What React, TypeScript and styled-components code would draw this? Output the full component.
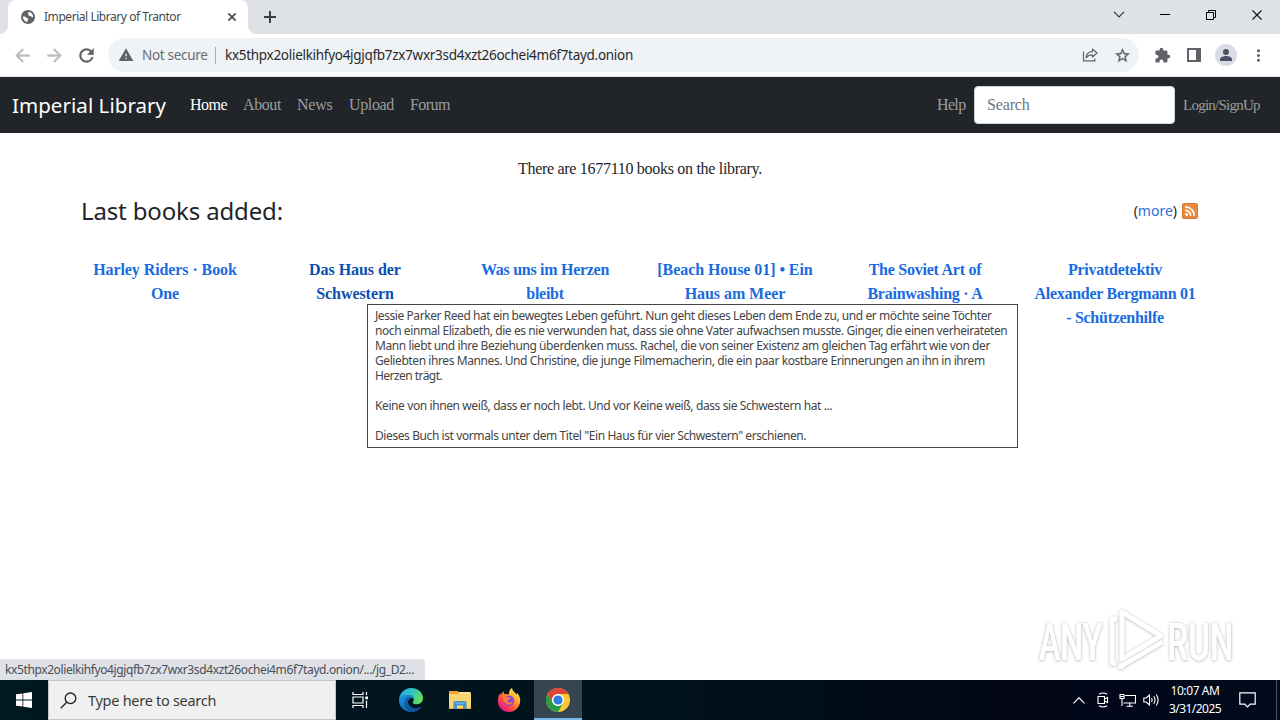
import React from 'react'
import styled, { createGlobalStyle } from 'styled-components'
import {
  MdArrowBack,
  MdArrowForward,
  MdExtension,
  MdMoreVert,
  MdRefresh,
  MdStarBorder,
  MdWarning
} from 'react-icons/md'

const GlobalStyle = createGlobalStyle`
  * {
    box-sizing: border-box;
  }

  body {
    margin: 0;
    background: #ffffff;
    overflow: hidden;
  }

  svg {
    display: block;
    flex: none;
  }
`

const uiFont = `'Noto Sans', 'Open Sans', sans-serif`
const serifFont = `'Liberation Serif', serif`

type TextProps = { $spacing?: number }

const Screen = styled.div`
  position: relative;
  display: flex;
  flex-direction: column;
  width: 1280px;
  height: 720px;
  font-family: ${uiFont};
`

/* ---- browser chrome ---- */

const TabStrip = styled.div`
  display: flex;
  height: 34px;
  padding-left: 8px;
  background: #dee1e6;
`

const Tab = styled.div`
  position: relative;
  display: flex;
  align-items: center;
  width: 240px;
  height: 34px;
  padding: 0 12px 0 13px;
  border-radius: 8px 8px 0 0;
  background: #ffffff;
  color: #5f6368;

  &::before,
  &::after {
    content: '';
    position: absolute;
    bottom: 0;
    width: 8px;
    height: 8px;
  }

  &::before {
    left: -8px;
    background: radial-gradient(circle at 0 0, #dee1e6 7.5px, #ffffff 8px);
  }

  &::after {
    right: -8px;
    background: radial-gradient(circle at 100% 0, #dee1e6 7.5px, #ffffff 8px);
  }
`

const TabTitle = styled.span<TextProps>`
  flex: 1;
  margin-left: 9px;
  font-size: 12px;
  line-height: 16px;
  letter-spacing: ${p => p.$spacing ?? 0}px;
  white-space: nowrap;
  color: #45494d;
`

const NewTab = styled.div`
  display: flex;
  align-items: center;
  margin-left: 16px;
`

const WindowButtons = styled.div`
  display: flex;
  height: 29px;
  margin-left: auto;
`

const WindowButton = styled.div`
  display: flex;
  align-items: center;
  justify-content: center;
  width: 46px;
`

const Toolbar = styled.div`
  display: flex;
  align-items: center;
  height: 43px;
  padding: 0 6px;
  border-bottom: 1px solid #e3e5e8;
  background: #ffffff;
  color: #5f6368;
`

const ToolButton = styled.div<{ $muted?: boolean; $bold?: boolean }>`
  display: flex;
  align-items: center;
  justify-content: center;
  width: 32px;
  height: 32px;
  color: ${p => (p.$muted ? '#babcbe' : '#5f6368')};

  svg {
    stroke-width: ${p => (p.$bold ? 0.5 : 0)};
  }

  /* material icons carry an empty bounding path */
  path[fill='none'][d^='M0 0'] {
    stroke: none;
  }
`

const Omnibox = styled.div`
  display: flex;
  align-items: center;
  width: 1031px;
  height: 34px;
  margin: 0 7px 0 6px;
  padding: 0 1px 0 10px;
  border-radius: 17px;
  background: #f0f3f5;
`

const Security = styled.span<TextProps>`
  width: 74px;
  margin-left: 8px;
  border-right: 1px solid #a9adb2;
  font-size: 13.5px;
  line-height: 17px;
  letter-spacing: ${p => p.$spacing ?? 0}px;
  white-space: nowrap;
  color: #686c71;
`

const Url = styled.span<TextProps>`
  flex: 1;
  margin-left: 9px;
  font-size: 13.5px;
  line-height: 18px;
  letter-spacing: ${p => p.$spacing ?? 0}px;
  white-space: nowrap;
  color: #26292c;
`

/* ---- page ---- */

const Page = styled.div`
  position: relative;
  flex: 1;
  background: #ffffff;
  color: #212529;
`

const Navbar = styled.nav`
  display: flex;
  align-items: center;
  height: 56px;
  padding: 0 12px;
  background: #212529;
  font-family: ${serifFont};
`

const Brand = styled.span<TextProps>`
  width: 178px;
  font-family: ${uiFont};
  font-size: 20.5px;
  line-height: 30px;
  letter-spacing: ${p => p.$spacing ?? 0}px;
  white-space: nowrap;
  color: #ffffff;
`

const NavLink = styled.span<{ $width: number; $active?: boolean; $size?: number; $spacing?: number }>`
  width: ${p => p.$width}px;
  font-size: ${p => p.$size ?? 16}px;
  line-height: 24px;
  letter-spacing: ${p => p.$spacing ?? 0}px;
  white-space: nowrap;
  color: ${p => (p.$active ? '#ffffff' : '#9b9d9f')};
`

const NavEnd = styled.div`
  display: flex;
  align-items: center;
  margin-left: auto;
`

const SearchInput = styled.input`
  width: 201px;
  height: 38px;
  margin-right: 8px;
  padding: 0 12px;
  border: 1px solid #ced4da;
  border-radius: 4px;
  background: #ffffff;
  font-family: ${serifFont};
  font-size: 16px;
  letter-spacing: -0.15px;

  &::placeholder {
    color: #6c757d;
    opacity: 1;
  }
`

const Container = styled.div`
  width: 1140px;
  margin: 0 auto;
`

const Summary = styled.p<TextProps>`
  margin: 24px 0 0;
  font-family: ${serifFont};
  font-size: 16px;
  line-height: 24px;
  letter-spacing: ${p => p.$spacing ?? 0}px;
  text-align: center;
`

const HeadingRow = styled.div`
  display: flex;
  align-items: center;
  justify-content: space-between;
  height: 60px;
  padding: 0 12px 0 11px;
`

const Heading = styled.h4<TextProps>`
  margin: 0;
  padding-bottom: 2px;
  font-size: 24px;
  font-weight: 400;
  line-height: 29px;
  letter-spacing: ${p => p.$spacing ?? 0}px;
`

const More = styled.div<TextProps>`
  display: flex;
  align-items: center;
  gap: 5px;
  font-size: 14px;
  line-height: 20px;
  letter-spacing: ${p => p.$spacing ?? 0}px;

  a {
    color: #2b6fd8;
  }
`

const Books = styled.div`
  display: grid;
  grid-template-columns: repeat(6, 190px);
  margin-top: 17px;
`

const BookTitle = styled.a<{ $hover?: boolean; $spacing?: number }>`
  font-family: ${serifFont};
  font-size: 16px;
  font-weight: 700;
  line-height: 24px;
  letter-spacing: ${p => p.$spacing ?? 0}px;
  text-align: center;
  white-space: pre-line;
  color: ${p => (p.$hover ? '#0a4fb0' : '#1a6be0')};
`

const Tooltip = styled.div`
  position: absolute;
  left: 367px;
  top: 227px;
  width: 651px;
  height: 144px;
  padding: 3px 7px;
  border: 1px solid #454545;
  background: #ffffff;
  font-size: 12px;
  line-height: 15px;
  color: #454545;
`

const TooltipLine = styled.div<TextProps>`
  height: 15px;
  letter-spacing: ${p => p.$spacing ?? 0}px;
  white-space: nowrap;
`

const StatusBubble = styled.div<TextProps>`
  position: absolute;
  left: 0;
  bottom: 0;
  width: 425px;
  height: 21px;
  padding-left: 5px;
  border-radius: 0 4px 0 0;
  background: #dee1e6;
  font-size: 12px;
  line-height: 22px;
  letter-spacing: ${p => p.$spacing ?? 0}px;
  white-space: nowrap;
  color: #4b4f54;
`

const Watermark = styled.div`
  position: absolute;
  right: 40px;
  bottom: 4px;
`

/* ---- taskbar ---- */

const TaskbarRoot = styled.div`
  display: flex;
  height: 40px;
  background: linear-gradient(90deg, #001821 0%, #00131d 50%, #020617 80%, #010a1c 100%);
  color: #ffffff;
`

const TaskButton = styled.div<{ $width?: number; $active?: boolean }>`
  display: flex;
  align-items: center;
  justify-content: center;
  width: ${p => p.$width ?? 49}px;
  height: 40px;
  border-bottom: 2px solid ${p => (p.$active ? '#76b9ed' : 'transparent')};
  padding-top: 2px;
  background: ${p => (p.$active ? '#36454e' : 'transparent')};
`

const TaskSearch = styled.div<TextProps>`
  display: flex;
  align-items: center;
  gap: 11px;
  width: 288px;
  height: 40px;
  padding-left: 11px;
  border: 1px solid #c4c6c7;
  background: #f0f0f0;
  font-size: 14.5px;
  letter-spacing: ${p => p.$spacing ?? 0}px;
  white-space: nowrap;
  color: #3a3a3a;
`

const Tray = styled.div`
  display: flex;
  align-items: center;
  margin-left: auto;
`

const TrayItem = styled.div<{ $width?: number }>`
  display: flex;
  justify-content: center;
  width: ${p => p.$width ?? 24}px;
`

const Clock = styled.div`
  width: 64px;
  font-size: 12px;
  line-height: 18px;
  text-align: center;
  white-space: nowrap;
`

const ClockLine = styled.div<TextProps>`
  letter-spacing: ${p => p.$spacing ?? 0}px;
`

const ShowDesktop = styled.div`
  width: 4px;
  height: 40px;
  margin-left: 8px;
  border-left: 1px solid #4a5260;
`

const books = [
  { title: 'Harley Riders · Book\nOne', spacing: -0.08 },
  { title: 'Das Haus der\nSchwestern', spacing: -0.05, hover: true },
  { title: 'Was uns im Herzen\nbleibt', spacing: -0.28 },
  { title: '[Beach House 01] • Ein\nHaus am Meer', spacing: -0.06 },
  { title: 'The Soviet Art of\nBrainwashing · A', spacing: -0.25 },
  { title: 'Privatdetektiv\nAlexander Bergmann 01\n- Schützenhilfe', spacing: -0.27 }
]

const description: [string, number][] = [
  ['Jessie Parker Reed hat ein bewegtes Leben geführt. Nun geht dieses Leben dem Ende zu, und er möchte seine Töchter', -0.43],
  ['noch einmal Elizabeth, die es nie verwunden hat, dass sie ohne Vater aufwachsen musste. Ginger, die einen verheirateten', -0.42],
  ['Mann liebt und ihre Beziehung überdenken muss. Rachel, die von seiner Existenz am gleichen Tag erfährt wie von der', -0.413],
  ['Geliebten ihres Mannes. Und Christine, die junge Filmemacherin, die ein paar kostbare Erinnerungen an ihn in ihrem', -0.413],
  ['Herzen trägt.', -0.55],
  ['', 0],
  ['Keine von ihnen weiß, dass er noch lebt. Und vor Keine weiß, dass sie Schwestern hat ...', -0.4],
  ['', 0],
  ['Dieses Buch ist vormals unter dem Titel "Ein Haus für vier Schwestern" erschienen.', -0.41]
]

const GlobeIcon = () => (
  <svg width="14" height="14" viewBox="0 0 14 14">
    <circle cx="7" cy="7" r="7" fill="#5f6368" />
    <path d="M1.800 6.600c1.800-.2 3 .3 3.600 1.200.5.800 1.700.3 1.900 1.300.1 1-1 1.100-1.200 2.800-2.600-.4-4.300-2.700-4.300-5.300z" fill="#ffffff" />
    <path d="M7.200 2c1.800 0 3.300.8 4.200 2.200.5.900.7 1.900.6 3-.9.3-1.700-.2-2-.9-.4-.8-1.800-.2-2.400-.9-.5-.7.300-1.200-.2-1.800-.4-.5-.8-.9-.2-1.600z" fill="#ffffff" />
  </svg>
)

const CloseIcon = ({ size, color, weight }: { size: number; color: string; weight: number }) => (
  <svg width={size} height={size} viewBox="0 0 10 10" stroke={color} strokeWidth={weight}>
    <path d="M.5.5l9 9M9.5.5l-9 9" />
  </svg>
)

const ShareIcon = () => (
  <svg width="16" height="16" viewBox="0 0 16 16" fill="none" stroke="#5f6368">
    <g strokeWidth="1.200">
      <path d="M1.500 4.500v9.300h11.300v-2.300" />
      <path d="M10.500 2l4.500 4-4.500 4V7.800C7.500 7.800 5.500 8.800 4 11c.3-3.800 2.600-6.300 6.500-6.700z" strokeLinejoin="round" />
    </g>
  </svg>
)

const RssIcon = () => (
  <svg width="16" height="16" viewBox="0 0 16 16" fill="none" stroke="#ffffff" strokeWidth="1.800">
    <rect width="16" height="16" rx="2.500" fill="#ea8a42" stroke="none" />
    <rect x=".5" y=".5" width="15" height="15" rx="2.500" stroke="#d9752f" strokeWidth="1" />
    <circle cx="4.600" cy="11.500" r="1.400" fill="#ffffff" stroke="none" />
    <path d="M3.200 7.300a5.500 5.500 0 0 1 5.500 5.500M3.200 3.800a9 9 0 0 1 9 9" />
  </svg>
)

const EdgeIcon = () => (
  <svg width="24" height="24" viewBox="0 0 24 24">
    <defs>
      <linearGradient id="edgeTop" x1="0" y1="0" x2="1" y2="0.400">
        <stop offset="0" stopColor="#1f9fe0" />
        <stop offset="0.550" stopColor="#2fc5c6" />
        <stop offset="1" stopColor="#64dc5c" />
      </linearGradient>
      <linearGradient id="edgeBody" x1="0" y1="0" x2="0.700" y2="1">
        <stop offset="0" stopColor="#2196e0" />
        <stop offset="1" stopColor="#0b5aa8" />
      </linearGradient>
    </defs>
    <path d="M0 12C.4 5 5.500 0 12 0c7 0 12 4.800 12 10.300 0 3.600-2.700 5.900-6 5.900-2.600 0-4.300-.9-4.300-1.800 0-.6 1.100-1 1.100-2.700C14.800 9 12.400 7 9 7 4.500 7 1 9 0 12z" fill="url(#edgeTop)" />
    <path d="M0 12C.8 8.700 4.200 6.700 8.500 6.700c3.200 0 5.700 1.600 6.200 4-1.200-1-3-.9-4.300.3-2.800 2.600-1.200 7.500 3.600 9 2.900.9 5.700.2 8.300-1.600C20.200 22 16.500 24 12 24 5 24-.3 18.500 0 12z" fill="url(#edgeBody)" />
    <path d="M8 9.500c-4 3-3.500 11.500 4 14.500 4.300 0 8-2 10.300-5.600-2.600 1.800-5.400 2.500-8.300 1.600-4.800-1.500-6.400-6.400-3.600-9 .5-.5 1.100-.8 1.700-.9-1.200-.9-2.800-1.200-4.100-.6z" fill="#0f4f96" opacity="0.700" />
  </svg>
)

const ExplorerIcon = () => (
  <svg width="22" height="18" viewBox="0 0 22 18">
    <path d="M0 0h9l1.500 2H22v16H0z" fill="#f2a52e" />
    <path d="M10 1h11.500v2.500H10z" fill="#fbe6a0" />
    <path d="M0 3h22v14H0z" fill="#fbd571" />
    <path d="M4.500 18v-6q0-2 2-2h9q2 0 2 2v6h-3.500v-3.500H8V18z" fill="#4393c8" />
    <path d="M6.500 11.500h9v1.500h-9z" fill="#6cb4dd" />
  </svg>
)

const FirefoxIcon = () => (
  <svg width="24" height="24" viewBox="0 0 24 24">
    <defs>
      <linearGradient id="foxFire" x1="0.850" y1="0.100" x2="0.200" y2="0.900">
        <stop offset="0" stopColor="#fff44f" />
        <stop offset="0.350" stopColor="#ffa02b" />
        <stop offset="0.700" stopColor="#ff4a41" />
        <stop offset="1" stopColor="#e3178a" />
      </linearGradient>
      <radialGradient id="foxGlobe">
        <stop offset="0" stopColor="#6a4be8" />
        <stop offset="1" stopColor="#a03dd8" />
      </radialGradient>
    </defs>
    <path d="M15 0c.2 2.200 1.700 3.300 3 4.700.8.800 1.300 1.500 1.600 2.300l.4-2.300c2.200 2.300 3.300 5.200 3.200 8.300C23 19 18.200 24 12 24S.8 19.200.8 13c0-3.300 1-5.800 2.500-8l.6 2.200C4.500 5.500 5.400 4.300 6.500 3.200c0 1.400.5 2.300 1.200 3 1.300-.4 2.800-.3 4.100.3C11.700 3.700 13 1.300 15 0z" fill="url(#foxFire)" />
    <circle cx="12" cy="12.800" r="5.300" fill="url(#foxGlobe)" />
    <path d="M5.500 9.500c1.500-1.500 4-1.500 6 0 .8.600 1.600.6 2.300.6-.4 1.200-1.700 1.600-2.600 2-.9.500-.9 1.500 0 2 1.700.9 3.500-.3 5 .4-1.500 2-4.700 2.800-7 1.200-2-1.300-3.400-3.600-3.700-6.200z" fill="#ff7b35" />
  </svg>
)

const ChromeIcon = () => (
  <svg width="24" height="24" viewBox="0 0 24 24">
    <circle cx="12" cy="12" r="12" fill="#fcc934" />
    <path d="M1.600 6A12 12 0 0 1 22.400 6H12a6 6 0 0 0-5.200 9z" fill="#dd4637" />
    <path d="M1.600 6A12 12 0 0 0 12 24l5.200-9A6 6 0 0 1 6.800 15z" fill="#2a9b4c" />
    <circle cx="12" cy="12" r="6" fill="#ffffff" />
    <circle cx="12" cy="12" r="4.600" fill="#2f7be4" />
  </svg>
)

const WatermarkLogo = () => (
  <svg width="206" height="74" viewBox="0 0 206 74">
    <defs>
      <filter id="markShadow" x="-5%" y="-10%" width="110%" height="125%">
        <feDropShadow dx="0" dy="0.500" stdDeviation="1.800" floodColor="#000000" floodOpacity="0.360" />
      </filter>
    </defs>
    <g filter="url(#markShadow)" fill="#ffffff">
      <g fontFamily="Roboto, sans-serif" fontSize="52" fontWeight="500">
        <text transform="translate(5 57.500) scale(.62 1)">ANY</text>
        <text transform="translate(133.500 57.500) scale(.635 1)">RUN</text>
      </g>
      <g fill="none" stroke="#ffffff" strokeWidth="4.500" strokeLinejoin="round">
        <path d="M88 10l39 24-39 23z" />
        <path d="M83 17h-5v44h4M87 67v-3l41-24" />
      </g>
    </g>
  </svg>
)

const BrowserTop: React.FC = () => (
  <>
    <TabStrip>
      <Tab>
        <GlobeIcon />
        <TabTitle $spacing={-0.45}>Imperial Library of Trantor</TabTitle>
        <CloseIcon size={8} color="#45494d" weight={2} />
      </Tab>
      <NewTab>
        <svg width="12" height="12" viewBox="0 0 12 12" stroke="#3c4043" strokeWidth="2">
          <path d="M6 0v12M0 6h12" />
        </svg>
      </NewTab>
      <WindowButtons>
        <WindowButton>
          <svg width="12" height="7" viewBox="0 0 12 7" fill="none" stroke="#333333" strokeWidth="1.200">
            <path d="M1 .8l5 5 5-5" />
          </svg>
        </WindowButton>
        <WindowButton>
          <svg width="10" height="1" viewBox="0 0 10 1"><path d="M0 0h10v1H0z" /></svg>
        </WindowButton>
        <WindowButton>
          <svg width="10" height="10" viewBox="0 0 10 10" fill="none" stroke="#000000">
            <path d="M.5 2.500h7v7h-7zM2.500 2.500v-2h7v7h-2" />
          </svg>
        </WindowButton>
        <WindowButton>
          <CloseIcon size={10} color="#111111" weight={1.1} />
        </WindowButton>
      </WindowButtons>
    </TabStrip>
    <Toolbar>
      <ToolButton $muted $bold><MdArrowBack size={21} /></ToolButton>
      <ToolButton $muted $bold><MdArrowForward size={21} /></ToolButton>
      <ToolButton $bold><MdRefresh size={21} /></ToolButton>
      <Omnibox>
        <MdWarning size={16} />
        <Security $spacing={-0.3}>Not secure</Security>
        <Url $spacing={-0.29}>kx5thpx2olielkihfyo4jgjqfb7zx7wxr3sd4xzt26ochei4m6f7tayd.onion</Url>
        <ToolButton><ShareIcon /></ToolButton>
        <ToolButton $bold><MdStarBorder size={17} /></ToolButton>
      </Omnibox>
      <ToolButton><MdExtension size={17} /></ToolButton>
      <ToolButton>
        <svg width="14" height="14" viewBox="0 0 14 14" fill="#5f6368">
          <path d="M0 0h14v14H0zM2 2v10h7V2z" fillRule="evenodd" />
        </svg>
      </ToolButton>
      <ToolButton>
        <svg width="22" height="22" viewBox="0 0 22 22">
          <circle cx="11" cy="11" r="11" fill="#dadce6" />
          <circle cx="11" cy="8" r="3" fill="#4b5066" />
          <path d="M5 17v-1.600C5 13.200 8.500 12 11 12s6 1.200 6 3.400V17z" fill="#4b5066" />
        </svg>
      </ToolButton>
      <ToolButton><MdMoreVert size={19} /></ToolButton>
    </Toolbar>
  </>
)

const LibraryPage: React.FC = () => (
  <Page>
    <Navbar>
      <Brand $spacing={0.05}>Imperial Library</Brand>
      <NavLink $width={53} $spacing={-0.5} $active>Home</NavLink>
      <NavLink $width={54} $spacing={-0.4}>About</NavLink>
      <NavLink $width={52} $spacing={-0.25}>News</NavLink>
      <NavLink $width={61} $spacing={-0.35}>Upload</NavLink>
      <NavLink $width={41} $spacing={-0.55}>Forum</NavLink>
      <NavEnd>
        <NavLink $width={37} $spacing={-0.65}>Help</NavLink>
        <SearchInput placeholder="Search" />
        <NavLink $width={85} $size={15} $spacing={-0.75}>Login/SignUp</NavLink>
      </NavEnd>
    </Navbar>
    <Container>
      <Summary $spacing={-0.3}>There are 1677110 books on the library.</Summary>
      <HeadingRow>
        <Heading $spacing={-0.15}>Last books added:</Heading>
        <More>
          <span>(<a>more</a>)</span>
          <RssIcon />
        </More>
      </HeadingRow>
      <Books>
        {books.map(book => (
          <BookTitle key={book.title} $hover={book.hover} $spacing={book.spacing}>{book.title}</BookTitle>
        ))}
      </Books>
    </Container>
    <Tooltip>
      {description.map(([text, spacing], i) => (
        <TooltipLine key={i} $spacing={spacing}>{text}</TooltipLine>
      ))}
    </Tooltip>
    <StatusBubble $spacing={-0.39}>kx5thpx2olielkihfyo4jgjqfb7zx7wxr3sd4xzt26ochei4m6f7tayd.onion/.../jg_D2...</StatusBubble>
    <Watermark><WatermarkLogo /></Watermark>
  </Page>
)

const Taskbar: React.FC = () => (
  <TaskbarRoot>
    <TaskButton $width={48}>
      <svg width="16" height="16" viewBox="0 0 16 16" fill="#ffffff">
        <path d="M0 2.300L6.500 1.400v6.200H0zM7.300 1.300L16 0v7.600H7.300zM0 8.400h6.500v6.200L0 13.700zM7.300 8.400H16V16l-8.700-1.300z" />
      </svg>
    </TaskButton>
    <TaskSearch $spacing={-0.28}>
      <svg width="17" height="17" viewBox="0 0 17 17" fill="none" stroke="#222222" strokeWidth="1.300">
        <circle cx="10.500" cy="6.300" r="5.300" />
        <path d="M6.700 10.200L.7 16.200" />
      </svg>
      Type here to search
    </TaskSearch>
    <TaskButton $width={49}>
      <svg width="17" height="16" viewBox="0 0 17 16" fill="none" stroke="#ffffff" strokeWidth="1.200">
        <path d="M1 0v2.500h10V0M1 16v-2.500h10V16M1 5h10v6H1zM14.500 0v3M14.500 8.500V16" />
        <path d="M13.300 4.500h2.700v2.700h-2.700z" fill="#ffffff" stroke="none" />
      </svg>
    </TaskButton>
    <TaskButton $width={51}><EdgeIcon /></TaskButton>
    <TaskButton $width={48}><ExplorerIcon /></TaskButton>
    <TaskButton $width={50}><FirefoxIcon /></TaskButton>
    <TaskButton $width={48} $active><ChromeIcon /></TaskButton>
    <Tray>
      <TrayItem>
        <svg width="12" height="7" viewBox="0 0 12 7" fill="none" stroke="#ffffff" strokeWidth="1.200">
          <path d="M.5 6.300L6 .8l5.500 5.500" />
        </svg>
      </TrayItem>
      <TrayItem>
        <svg width="12" height="16" viewBox="0 0 12 16" fill="none" stroke="#ffffff" strokeWidth="1.100">
          <path d="M1 4.500h6.500v7H1zM7.500 7l3-1.500v5L7.500 9" />
          <path d="M2 2.200Q6-.3 10 2.200M2 13.800q4 2.500 8 0" />
        </svg>
      </TrayItem>
      <TrayItem>
        <svg width="17" height="14" viewBox="0 0 17 14" fill="none" stroke="#ffffff" strokeWidth="1.100">
          <path d="M6 2.500h10.500v7.500H4.500M10.800 10v3M7.500 13.300h6.500" />
          <path d="M1 1.500h4v4H1zM3 5.500v7.500M1 3.500h4" />
        </svg>
      </TrayItem>
      <TrayItem>
        <svg width="17" height="14" viewBox="0 0 17 14" fill="none" stroke="#ffffff" strokeWidth="1.100">
          <path d="M.8 5v4h2.400l3.300 3V2L3.200 5zM8.500 5q1.200 2 0 4M10.800 3.200q2.400 3.800 0 7.600M13.200 1.500q3.800 5.500 0 11" />
        </svg>
      </TrayItem>
      <Clock>
        <ClockLine $spacing={-0.4}>10:07 AM</ClockLine>
        <ClockLine $spacing={-0.55}>3/31/2025</ClockLine>
      </Clock>
      <TrayItem $width={41}>
        <svg width="17" height="16" viewBox="0 0 17 16" fill="none" stroke="#ffffff" strokeWidth="1.200">
          <path d="M.8.800h15.400v11.400h-5l-2.700 2.800-2.700-2.800h-5z" />
        </svg>
      </TrayItem>
      <ShowDesktop />
    </Tray>
  </TaskbarRoot>
)

export default function App() {
  return (
    <Screen>
      <GlobalStyle />
      <BrowserTop />
      <LibraryPage />
      <Taskbar />
    </Screen>
  )
}
